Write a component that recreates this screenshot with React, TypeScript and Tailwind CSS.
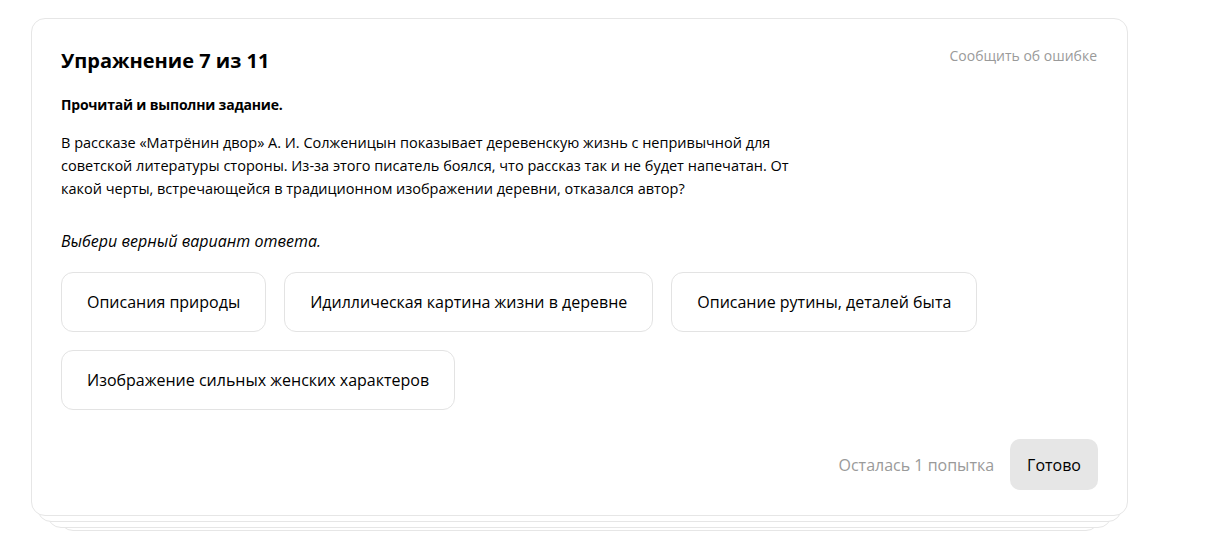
import React from "react";

const options = [
  "Описания природы",
  "Идиллическая картина жизни в деревне",
  "Описание рутины, деталей быта",
  "Изображение сильных женских характеров",
];

export default function App() {
  return (
    <div className="w-[1214px] h-[545px] bg-white overflow-hidden" style={{ fontFamily: '"Open Sans", "Noto Sans", sans-serif' }}>
      <div className="relative ml-[31px] mt-[18px] w-[1097px]">
        {/* stacked layers */}
        <div className="absolute left-[28px] right-[28px] bottom-[-15px] h-[40px] rounded-b-[14px] border border-[#e6e6e6] bg-white" />
        <div className="absolute left-[16px] right-[16px] bottom-[-12px] h-[40px] rounded-b-[14px] border border-[#e6e6e6] bg-white" />
        <div className="absolute left-[6px] right-[6px] bottom-[-6px] h-[40px] rounded-b-[14px] border border-[#e6e6e6] bg-white" />
        <div className="relative rounded-[14px] border border-[#e6e6e6] bg-white px-[29px] pt-[26px] pb-[25px] h-[498px] flex flex-col">
          <div className="flex items-start justify-between">
            <h1 className="text-[20px] font-bold text-black leading-[30px] mt-[1px]">Упражнение 7 из 11</h1>
            <span className="text-[14px] text-[#9a9a9a] leading-[20px] mt-[1px] mr-[1px]">Сообщить об ошибке</span>
          </div>
          <p className="mt-[19px] text-[14px] font-bold text-black leading-[20px] tracking-[-0.2px]">Прочитай и выполни задание.</p>
          <p className="mt-[16px] text-[14.5px] text-black leading-[23px] w-[740px]">
            В рассказе «Матрёнин двор» А. И. Солженицын показывает деревенскую жизнь с непривычной для советской литературы стороны. Из-за этого писатель боялся, что рассказ так и не будет напечатан. От какой черты, встречающейся в традиционном изображении деревни, отказался автор?
          </p>
          <p className="mt-[29px] text-[16px] italic text-black leading-[24px]">Выбери верный вариант ответа.</p>
          <div className="mt-[19px] flex flex-wrap gap-x-[18px] gap-y-[18px] w-[960px]">
            {options.map((o) => (
              <div key={o} className="h-[60px] px-[25px] flex items-center rounded-[12px] border border-[#e3e3e3] text-[16px] text-black">
                {o}
              </div>
            ))}
          </div>
          <div className="mt-auto flex items-center justify-end gap-[16px]">
            <span className="text-[16px] text-[#9a9a9a]">Осталась 1 попытка</span>
            <button className="h-[51px] px-[17px] rounded-[10px] bg-[#e6e6e6] text-[16px] text-black">Готово</button>
          </div>
        </div>
      </div>
    </div>
  );
}
